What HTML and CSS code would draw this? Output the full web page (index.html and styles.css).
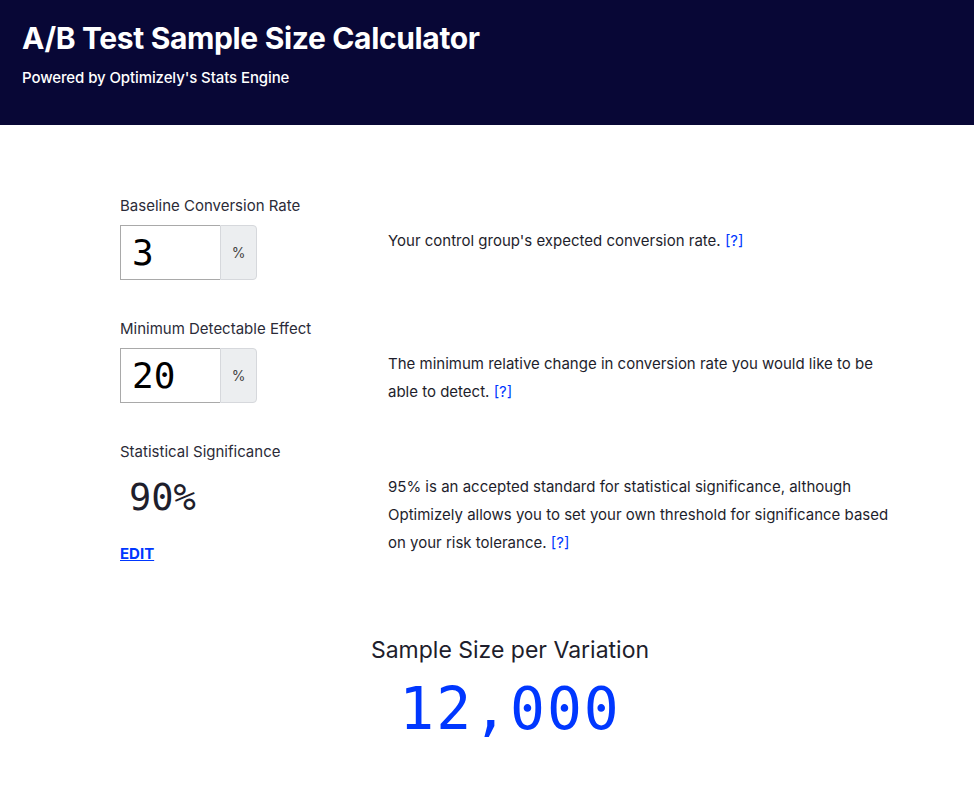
FILE: index.html
```html
<!DOCTYPE html>
<html lang="en">
<head>
    <meta charset="UTF-8">
    <meta name="viewport" content="width=device-width, initial-scale=1.0">
    <title>A/B Test Sample Size Calculator</title>
    <link rel="stylesheet" href="styles.css">
</head>
<body>

<!-- Header -->
<div class="header">
    <h1>A/B Test Sample Size Calculator</h1>
    <p>Powered by Optimizely's Stats Engine</p>
</div>

<div class="content">
    <div class="row">
        <label class="row-label" for="baseline">Baseline Conversion Rate</label>
        <div class="field">
            <input type="text" id="baseline" value="3">
            <span class="addon">%</span>
        </div>
        <p class="desc">Your control group's expected conversion rate. <a href="#">[?]</a></p>
    </div>

    <div class="row">
        <label class="row-label" for="mde">Minimum Detectable Effect</label>
        <div class="field">
            <input type="text" id="mde" value="20">
            <span class="addon">%</span>
        </div>
        <p class="desc">The minimum relative change in conversion rate you would like to be able to detect. <a href="#">[?]</a></p>
    </div>

    <div class="row">
        <span class="row-label">Statistical Significance</span>
        <div class="sig">
            <div class="sig-value">90%</div>
            <a href="#" class="edit">EDIT</a>
        </div>
        <p class="desc">95% is an accepted standard for statistical significance, although Optimizely allows you to set your own threshold for significance based on your risk tolerance. <a href="#">[?]</a></p>
    </div>

    <div class="result">
        <h2>Sample Size per Variation</h2>
        <div class="result-value">12,000</div>
    </div>
</div>

</body>
</html>
```

FILE: styles.css
```css
body {
    font-family: Inter, "Liberation Sans", sans-serif;
    margin: 0;
    padding: 0;
    background: #fff;
    color: #1e1e2c;
}
.header {
    background-color: #080736;
    color: #fff;
    height: 125px;
    padding: 20px 22px 0;
    box-sizing: border-box;
}
.header h1 {
    margin: 0;
    font-size: 30px;
    font-weight: 700;
    line-height: 36px;
    letter-spacing: -0.35px;
}
.header p {
    margin: 12px 0 0;
    font-size: 15px;
    font-weight: 500;
    letter-spacing: -0.1px;
}
.content {
    width: 780px;
    margin-left: 120px;
    padding-top: 71px;
}
.row {
    display: grid;
    grid-template-columns: 268px 512px;
    grid-template-rows: auto auto;
    margin-bottom: 39px;
}
.row-label {
    grid-column: 1 / 3;
    display: block;
    font-size: 15px;
    line-height: 20px;
    color: #2b2b38;
    margin-bottom: 9px;
}
.field {
    display: flex;
    height: 55px;
}
.field input {
    width: 100px;
    box-sizing: border-box;
    border: 1px solid #a9a9a9;
    border-right: none;
    padding: 0 11px;
    font-family: "DejaVu Sans Mono", monospace;
    font-size: 36px;
    color: #000;
    outline: none;
}
.addon {
    width: 37px;
    box-sizing: border-box;
    border: 1px solid #d6d8dc;
    border-radius: 0 4px 4px 0;
    background: #eceef0;
    color: #444;
    font-size: 14px;
    display: flex;
    align-items: center;
    justify-content: center;
}
.desc {
    margin: 2px 0 -3px;
    font-size: 15px;
    line-height: 28px;
    color: #1e1e2c;
}
.desc a {
    color: #0037ff;
    text-decoration: none;
}
.sig {
    padding-top: 3px;
}
.sig-value {
    font-family: "DejaVu Sans Mono", monospace;
    font-size: 37px;
    color: #1e1e2c;
    padding-left: 9px;
    line-height: 48px;
}
.edit {
    display: inline-block;
    margin-top: 22px;
    font-size: 15px;
    font-weight: 700;
    color: #0037ff;
}
.result {
    text-align: center;
    padding-top: 34px;
}
.result h2 {
    margin: 0;
    font-size: 23px;
    font-weight: 400;
    color: #1e1e2c;
}
.result-value {
    font-family: "DejaVu Sans Mono", monospace;
    font-size: 58px;
    color: #0037ff;
    margin-top: 11px;
    letter-spacing: 2px;
}
```
